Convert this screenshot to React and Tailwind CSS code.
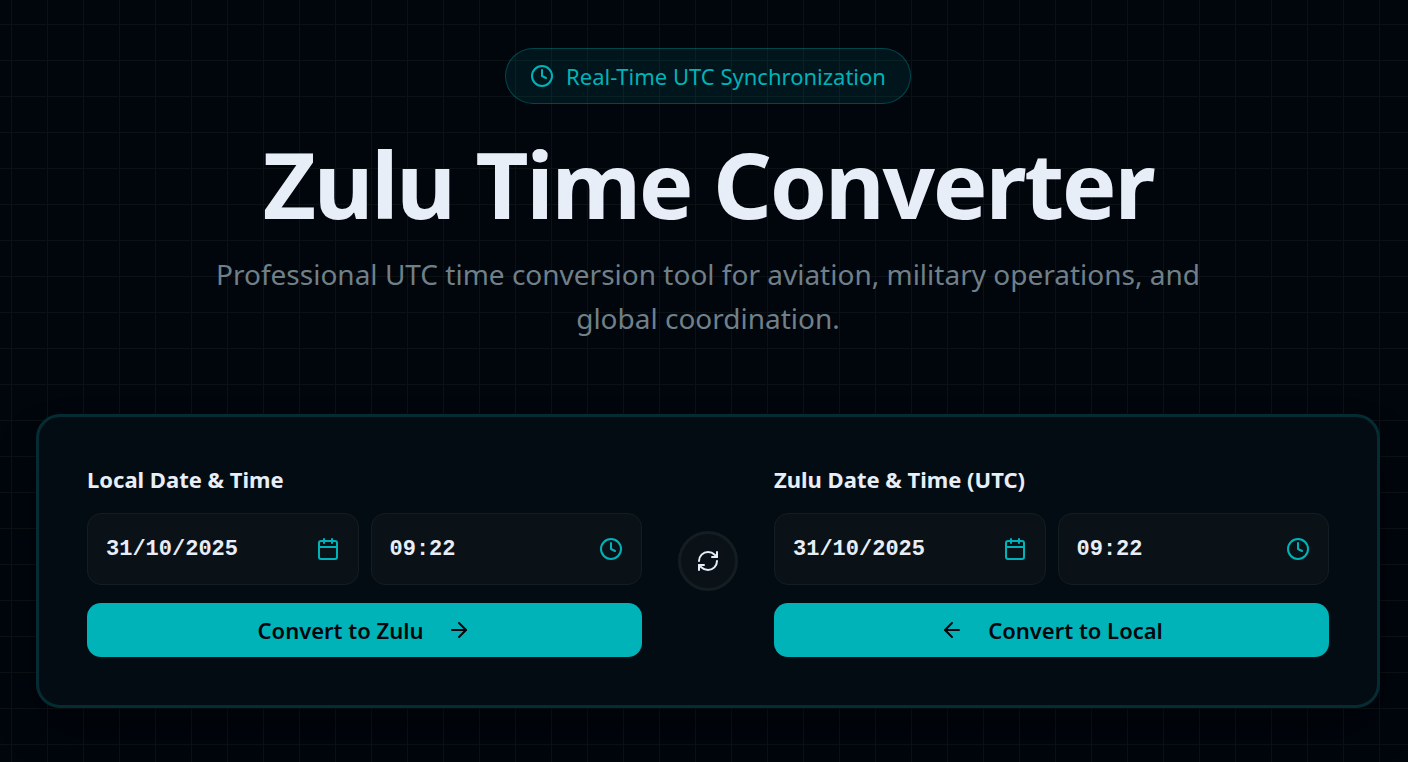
import { useState } from "react";
import { ArrowLeft, ArrowRight, Calendar, Clock, RefreshCw } from "lucide-react";

function Field({ id, label, value, onChange, icon: Icon }) {
  return (
    <div className="flex h-18 min-w-0 flex-1 items-center rounded-[14px] border border-[#141d22] bg-[#0a1218] px-[18px]">
      <input
        id={id}
        type="text"
        aria-label={label}
        value={value}
        onChange={(event) => onChange(event.target.value)}
        className="w-full min-w-0 flex-1 bg-transparent font-['Liberation_Mono',monospace] text-[22px] font-bold text-[#e8eef7] outline-none"
      />
      <Icon className="size-6 shrink-0 text-[#00b3b8]" aria-hidden="true" />
    </div>
  );
}

function Panel({ id, title, children }) {
  const [date, setDate] = useState("31/10/2025");
  const [time, setTime] = useState("09:22");
  return (
    <section className="flex min-w-0 flex-col gap-[18px]">
      <label htmlFor={`${id}-date`} className="pb-0.5 text-[22px] leading-7 font-bold text-[#e8eef7]">
        {title}
      </label>
      <div className="flex gap-3">
        <Field id={`${id}-date`} label={`${title} date`} value={date} onChange={setDate} icon={Calendar} />
        <Field id={`${id}-time`} label={`${title} time`} value={time} onChange={setTime} icon={Clock} />
      </div>
      <button
        type="button"
        className="flex h-[54px] items-center justify-center gap-6 rounded-[14px] bg-[#00b3b8] text-[22px] font-semibold text-[#02050c]"
      >
        {children}
      </button>
    </section>
  );
}

export default function App() {
  return (
    <div className="min-h-screen bg-[#01050c] bg-[linear-gradient(to_right,#0b1114_1px,transparent_1px),linear-gradient(to_bottom,#0b1114_1px,transparent_1px)] bg-size-[36px_36px] bg-position-[11px_24px] pt-12 pr-7 pb-[54px] pl-9 font-['Noto_Sans',sans-serif]">
      <header className="flex flex-col items-center text-center">
        <div className="flex h-14 items-center gap-3 rounded-full border border-[#00b3b8]/30 bg-[#00b3b8]/10 px-6 text-[#00b3b8]">
          <Clock className="size-6" aria-hidden="true" />
          <span className="text-[22px]">Real-Time UTC Synchronization</span>
        </div>
        <h1 className="mt-8 text-[92px] leading-[96px] font-bold tracking-tight text-[#e8eef7]">
          Zulu Time Converter
        </h1>
        <p className="mt-5 max-w-[1008px] text-[28px] leading-11 text-[#708089]">
          Professional UTC time conversion tool for aviation, military operations, and global coordination.
        </p>
      </header>
      <main className="mt-[74px] grid grid-cols-[1fr_auto_1fr] items-center gap-9 rounded-3xl border-3 border-[#052c32] bg-[#040c13] p-12 shadow-2xl shadow-black/40">
        <Panel id="local" title="Local Date &amp; Time">
          Convert to Zulu
          <ArrowRight className="size-6" aria-hidden="true" />
        </Panel>
        <button
          type="button"
          aria-label="Swap"
          className="flex size-15 items-center justify-center rounded-full border-3 border-[#141d22] bg-[#0a1218] text-[#e8eef7]"
        >
          <RefreshCw className="size-6" aria-hidden="true" />
        </button>
        <Panel id="zulu" title="Zulu Date &amp; Time (UTC)">
          <ArrowLeft className="size-6" aria-hidden="true" />
          Convert to Local
        </Panel>
      </main>
    </div>
  );
}
